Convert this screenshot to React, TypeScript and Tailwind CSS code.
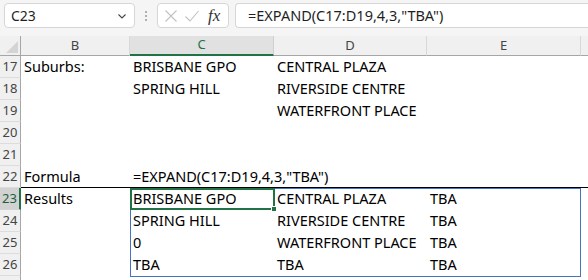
import React from 'react';

const FONT = { fontFamily: '"Noto Sans", "Open Sans", sans-serif' };

type Row = { n: number | null; cells: string[] };

const ROWS: Row[] = [
    { n: 17, cells: ['Suburbs:', 'BRISBANE GPO', 'CENTRAL PLAZA', ''] },
    { n: 18, cells: ['', 'SPRING HILL', 'RIVERSIDE CENTRE', ''] },
    { n: 19, cells: ['', '', 'WATERFRONT PLACE', ''] },
    { n: 20, cells: ['', '', '', ''] },
    { n: 21, cells: ['', '', '', ''] },
    { n: 22, cells: ['Formula', '=EXPAND(C17:D19,4,3,"TBA")', '', ''] },
    { n: 23, cells: ['Results', 'BRISBANE GPO', 'CENTRAL PLAZA', 'TBA'] },
    { n: 24, cells: ['', 'SPRING HILL', 'RIVERSIDE CENTRE', 'TBA'] },
    { n: 25, cells: ['', '0', 'WATERFRONT PLACE', 'TBA'] },
    { n: 26, cells: ['', 'TBA', 'TBA', 'TBA'] },
    { n: null, cells: ['', '', '', ''] },
];

const COL_W = ['w-[109px]', 'w-[144px]', 'w-[153px]', 'w-[154px]'];

const TopBar: React.FC = () => (
    <div className="flex h-[36px] items-start bg-[#f5f5f5] pt-[3px] pl-[4px]">
        {/* Name box */}
        <div className="flex h-[25px] w-[131px] items-center justify-between rounded-[4px] border border-[#d6d6d6] bg-white pl-[6px] pr-[6px]">
            <span className="text-[14px] text-[#1f1f1f]">C23</span>
            <svg width="12" height="12" viewBox="0 0 12 12" fill="none" stroke="#444" strokeWidth="1.1">
                <path d="M2.5 4.5 L6 8 L9.5 4.5" />
            </svg>
        </div>
        {/* Dots */}
        <div className="flex h-[25px] w-[22px] flex-col items-center justify-center gap-[2px]">
            <span className="h-[2px] w-[2px] rounded-full bg-[#999]" />
            <span className="h-[2px] w-[2px] rounded-full bg-[#999]" />
            <span className="h-[2px] w-[2px] rounded-full bg-[#999]" />
        </div>
        {/* Fx box */}
        <div className="flex h-[25px] w-[72px] items-center gap-[6px] rounded-[4px] border border-[#d6d6d6] bg-white pl-[6px]">
            <svg width="14" height="14" viewBox="0 0 14 14" fill="none" stroke="#c2c2c2" strokeWidth="1.1">
                <path d="M1.5 1.5 L12.5 12.5 M12.5 1.5 L1.5 12.5" />
            </svg>
            <svg width="16" height="14" viewBox="0 0 16 14" fill="none" stroke="#c2c2c2" strokeWidth="1.1">
                <path d="M1.5 7.5 L6 12 L14.5 2" />
            </svg>
            <span className="ml-[2px] text-[17px] italic text-[#333]" style={{ fontFamily: '"Liberation Serif", serif' }}>
                fx
            </span>
        </div>
        {/* Formula box */}
        <div className="ml-[6px] flex h-[25px] flex-1 items-center rounded-l-[4px] border border-r-0 border-[#d6d6d6] bg-white pl-[12px]">
            <span className="text-[14.5px] text-[#1f1f1f]">=EXPAND(C17:D19,4,3,"TBA")</span>
        </div>
    </div>
);

const HeaderRow: React.FC = () => {
    const cols = ['B', 'C', 'D', 'E'];
    return (
        <div className="flex h-[20px] bg-[#f0f0f0]">
            <div className="relative w-[21px] shrink-0 border-r border-b border-[#a6a6a6]">
                <svg className="absolute bottom-[2px] right-[2px]" width="12" height="12" viewBox="0 0 12 12">
                    <path d="M12 0 L12 12 L0 12 Z" fill="#d4d4d4" />
                </svg>
            </div>
            {cols.map((c, i) => (
                <div
                    key={c}
                    className={
                        c === 'C'
                            ? `${COL_W[i]} flex shrink-0 items-center justify-center border-r border-b-2 border-r-[#d0d0d0] border-b-[#217346] bg-[#e1e1e1] text-[13px] text-[#217346]`
                            : `${COL_W[i]} flex shrink-0 items-center justify-center border-r border-b border-r-[#d8d8d8] border-b-[#a6a6a6] text-[13px] text-[#444]`
                    }
                >
                    {c}
                </div>
            ))}
            <div className="flex-1 border-b border-[#a6a6a6]" />
        </div>
    );
};

const App: React.FC = () => (
    <div className="h-[280px] w-[588px] overflow-hidden bg-white" style={FONT}>
        <TopBar />
        <HeaderRow />
        <div className="relative">
            {ROWS.map((row, idx) => {
                const active = row.n === 23;
                return (
                    <div key={idx} className="flex h-[22px]">
                        <div
                            className={
                                active
                                    ? 'flex w-[21px] shrink-0 items-center justify-center border-r-2 border-b border-r-[#217346] border-b-[#d4d4d4] bg-[#d2d2d2] text-[13px] text-[#1e5e3a]'
                                    : 'flex w-[21px] shrink-0 items-center justify-center border-r border-b border-r-[#a6a6a6] border-b-[#dcdcdc] bg-[#f0f0f0] text-[13px] text-[#444]'
                            }
                        >
                            {row.n}
                        </div>
                        <div className={row.n === 22 ? 'flex flex-1 border-b border-black' : 'flex flex-1'}>
                            {row.cells.map((text, i) => (
                                <div
                                    key={i}
                                    className={`${COL_W[i]} flex shrink-0 items-center overflow-visible whitespace-nowrap pl-[3px] text-[14.5px] text-black`}
                                >
                                    {text}
                                </div>
                            ))}
                        </div>
                    </div>
                );
            })}

            {/* Spill range outline */}
            <div className="pointer-events-none absolute left-[130px] top-[132px] h-[89px] w-[451px] border border-[#4472c4]" />

            {/* Active cell */}
            <div className="pointer-events-none absolute left-[130px] top-[132px] h-[22px] w-[145px] border-2 border-[#217346]">
                <span className="absolute -bottom-[4px] -right-[4px] h-[6px] w-[6px] border border-white bg-[#217346]" />
            </div>
        </div>
    </div>
);

export default App;
